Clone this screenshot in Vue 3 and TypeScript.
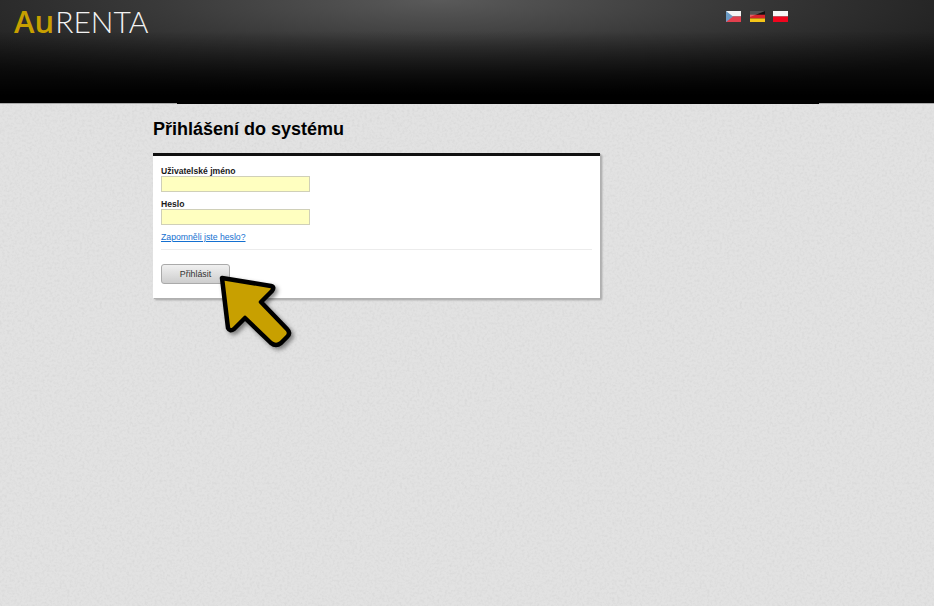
<template>
  <div class="page">
    <svg class="grain" width="934" height="606" aria-hidden="true">
      <filter id="paper">
        <feTurbulence type="fractalNoise" baseFrequency="0.4" numOctaves="2" seed="4" />
        <feColorMatrix type="matrix" values="0 0 0 0 0  0 0 0 0 0  0 0 0 0 0  0.5 0.5 0 0 -0.42" />
      </filter>
      <rect width="934" height="606" filter="url(#paper)" opacity="0.1" />
    </svg>

    <header class="top">
      <div class="logo"><b>Au</b><span>RENTA</span></div>
      <nav class="flags">
        <svg width="15" height="11" viewBox="0 0 16 11" preserveAspectRatio="none">
          <rect width="16" height="5.5" fill="#f4f4f4" />
          <rect y="5.5" width="16" height="5.5" fill="#e2404e" />
          <path d="M0 0l7.5 5.5L0 11z" fill="#6b9ac4" />
        </svg>
        <svg width="15" height="11" viewBox="0 0 16 11" preserveAspectRatio="none">
          <rect width="16" height="11" fill="#111" />
          <rect y="3.7" width="16" height="3.7" fill="#d8242a" />
          <rect y="7.4" width="16" height="3.6" fill="#f5c518" />
          <path d="M0 0h16L0 6z" fill="#fff" opacity="0.28" />
        </svg>
        <svg width="15" height="11" viewBox="0 0 16 11" preserveAspectRatio="none">
          <rect width="16" height="5.5" fill="#f6f6f6" />
          <rect y="5.5" width="16" height="5.5" fill="#f0051e" />
        </svg>
      </nav>
    </header>

    <main class="content">
      <h1>Přihlášení do systému</h1>
      <form class="card" @submit.prevent>
        <label for="user">Uživatelské jméno</label>
        <input id="user" type="text" />
        <label for="pass">Heslo</label>
        <input id="pass" type="password" />
        <a href="#" class="forgot">Zapomněli jste heslo?</a>
        <hr />
        <button type="submit">Přihlásit</button>
      </form>
    </main>

    <svg class="arrow" width="110" height="100" viewBox="0 0 110 100" aria-hidden="true">
      <defs>
        <filter id="drop" x="-20%" y="-20%" width="150%" height="150%">
          <feDropShadow dx="2.5" dy="2.5" stdDeviation="2" flood-color="#000" flood-opacity="0.45" />
        </filter>
      </defs>
      <path
        d="M9 7 L58 15 Q62 16 59 20 L48 31 L74 58 Q78 62 74 66 L68 72 Q63 76 58 72 L32 47 L21 58 Q17 61 15 57 Z"
        fill="#c8a000"
        stroke="#000"
        stroke-width="4.5"
        stroke-linejoin="round"
        filter="url(#drop)"
      />
    </svg>
  </div>
</template>

<script setup lang="ts">
</script>

<style>
html,
body {
  margin: 0;
  background: #dfdfdf;
}
</style>

<style scoped>
.page {
  position: relative;
  width: 934px;
  height: 606px;
  overflow: hidden;
  background: #e2e2e2;
  font-family: "Liberation Sans", Arial, sans-serif;
}

.grain {
  position: absolute;
  left: 0;
  top: 0;
}

.top {
  position: relative;
  display: flex;
  justify-content: space-between;
  box-sizing: border-box;
  height: 104px;
  padding: 4px 146px 0 14px;
  background:
    linear-gradient(to bottom, rgba(0, 0, 0, 0) 30%, #000 92%),
    radial-gradient(ellipse 620px 100px at 440px 0, #5a5a5a 0%, #3a3a3a 45%, #1a1a1a 100%);
  border-bottom: 1px solid #a8a8a8;
}

.top::after {
  content: "";
  position: absolute;
  left: 177px;
  right: 115px;
  bottom: -1px;
  height: 1px;
  background: #000;
}

.logo {
  font-size: 30px;
  line-height: 34px;
}

.logo b {
  color: #c8a000;
  font-family: "Open Sans", sans-serif;
  font-size: 31px;
  font-weight: 600;
}

.logo span {
  margin-left: 1px;
  color: #f2f2f2;
  font-family: Lato, sans-serif;
  font-weight: 300;
}

.flags {
  display: flex;
  gap: 8.5px;
  padding-top: 7px;
}

.content {
  position: relative;
  padding: 15px 0 0 153px;
}

h1 {
  margin: 0 0 14px;
  font-size: 18px;
  line-height: 20px;
  font-weight: 700;
  color: #000;
}

.card {
  display: flex;
  flex-direction: column;
  align-items: flex-start;
  box-sizing: border-box;
  width: 447px;
  height: 145px;
  padding: 9px 8px 0;
  background: #fff;
  border-top: 3px solid #111;
  box-shadow: 1px 1px 0 #b0b0b0, 2px 2px 2px #a0a0a0;
}

label {
  padding-top: 1px;
  font-size: 8.6px;
  line-height: 10px;
  font-weight: 700;
  color: #1a1a1a;
}

input {
  box-sizing: border-box;
  width: 149px;
  height: 16px;
  margin: 0 0 6px;
  padding: 0;
  background: #ffffc0;
  border: 1px solid #d0d0b8;
}

.forgot {
  font-size: 8.7px;
  line-height: 12px;
  color: #1470d0;
}

hr {
  align-self: stretch;
  height: 1px;
  margin: 6px 0 14px;
  border: 0;
  background: #ececec;
}

button {
  width: 69px;
  height: 20px;
  padding: 0;
  font-family: inherit;
  font-size: 8.8px;
  color: #333;
  background: linear-gradient(to bottom, #f0f0f0, #cdcdcd);
  border: 1px solid #aaa;
  border-radius: 3px;
}

.arrow {
  position: absolute;
  left: 213px;
  top: 271px;
}
</style>
